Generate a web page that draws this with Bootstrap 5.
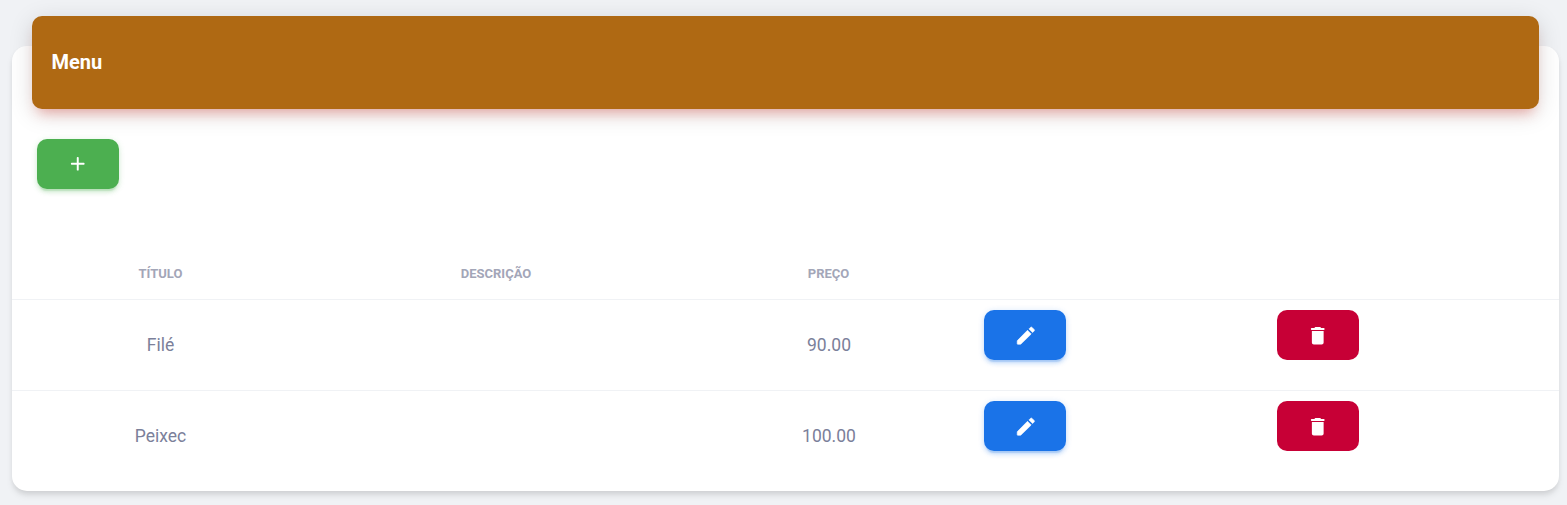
<!DOCTYPE html>
<html lang="pt-BR">
<head>
<meta charset="utf-8">
<meta name="viewport" content="width=device-width, initial-scale=1">
<title>Menu</title>
<link href="https://cdn.jsdelivr.net/npm/bootstrap@5.3.0/dist/css/bootstrap.min.css" rel="stylesheet">
<style>
  body { background: #f0f2f5; font-family: Roboto, "Liberation Sans", sans-serif; color: #7b809a; overflow: hidden; }
  .menu-page { padding: 46px 8px 14px 12px; }
  .menu-card { height: 445px; border-radius: 15px; box-shadow: 0 5px 7.5px -1.25px rgba(0,0,0,.1), 0 2.5px 5px -1.25px rgba(0,0,0,.06); }
  .menu-head { height: 93px; margin: -30px 20px 0; padding: 0 19.5px 1px; background: #af6913; border-radius: 10px;
    box-shadow: 0 5px 25px 0 rgba(0,0,0,.14), 0 8.75px 12.5px -6.25px rgba(244,67,54,.4); }
  .menu-head h6 { font-size: 20px; line-height: 32px; }
  .action { width: 82px; height: 50px; padding: 0; border: 0; border-radius: 10px; }
  .action-add { margin: 30px 0 0 25px; background: #4caf50; box-shadow: 0 3.75px 3.75px 0 rgba(76,175,80,.1), 0 3.75px 1.25px -2.5px rgba(76,175,80,.2), 0 1.25px 6.25px 0 rgba(76,175,80,.2); }
  .action-edit { background: #1a73e8; box-shadow: 0 3.75px 3.75px 0 rgba(26,115,232,.1), 0 3.75px 1.25px -2.5px rgba(26,115,232,.2), 0 1.25px 6.25px 0 rgba(26,115,232,.2); }
  .action-delete { background: #c70036; }
  .action svg { display: block; width: 23.5px; height: 23.5px; fill: #fff; margin: 2px auto 0; }
  .action-add svg { margin-top: 0; }
  .action-edit svg { margin-left: 30px; }
  .menu-table { table-layout: fixed; margin-top: 57px; color: #7b809a; --bs-table-bg: transparent; }
  .menu-table th { height: 53px; padding: 3px 0 0; font-size: 13px; line-height: 20px; font-weight: 700; color: #a3a6b8; text-transform: uppercase; border-bottom: 1px solid #f0f2f5; }
  .menu-table td { height: 91px; padding: 10px; font-size: 17.5px; line-height: 26px; color: #7b809a; border-bottom: 1px solid #f0f2f5; }
  .menu-table td:nth-child(3) { padding-left: 11px; }
  .menu-table tr:last-child td { border-bottom: 0; }
</style>
</head>
<body>
<svg class="d-none" aria-hidden="true">
  <symbol id="icon-add" viewBox="0 0 24 24"><path d="M18 13h-5v5c0 .55-.45 1-1 1s-1-.45-1-1v-5H6c-.55 0-1-.45-1-1s.45-1 1-1h5V6c0-.55.45-1 1-1s1 .45 1 1v5h5c.55 0 1 .45 1 1s-.45 1-1 1z"/></symbol>
  <symbol id="icon-edit" viewBox="0 0 24 24"><path stroke="#fff" stroke-width=".6" stroke-linejoin="round" d="M3.300 17.3v2.900c0 .28.22.5.5.5h2.900c.13 0 .26-.05.35-.15L17.600 10.200l-3.800-3.800L3.450 16.940c-.1.1-.15.22-.15.36zM20.500 7.200a1.200 1.200 0 0 0 0-1.700l-2-2a1.200 1.200 0 0 0-1.700 0l-1.500 1.500 3.700 3.700 1.500-1.500z"/></symbol>
  <symbol id="icon-delete" viewBox="0 0 24 24"><path d="M6 19c0 1.100.9 2 2 2h8c1.100 0 2-.9 2-2V7.200H6V19zM18 4h-2.500l-.71-.71c-.18-.18-.44-.29-.7-.29H9.910c-.26 0-.52.11-.7.29L8.500 4H6c-.55 0-1 .45-1 1s.45 1 1 1h12c.55 0 1-.45 1-1s-.45-1-1-1z"/></symbol>
</svg>
<main class="menu-page">
  <div class="card menu-card border-0">
    <div class="menu-head d-flex align-items-center">
      <h6 class="text-white fw-bold m-0">Menu</h6>
    </div>
    <button class="btn action action-add" type="button" aria-label="Adicionar"><svg><use href="#icon-add"/></svg></button>
    <table class="table menu-table mb-0">
      <colgroup>
        <col style="width:297px"><col style="width:374px"><col style="width:291px"><col style="width:293px"><col>
      </colgroup>
      <thead>
        <tr class="text-center align-middle"><th>Título</th><th>Descrição</th><th>Preço</th><th></th><th></th></tr>
      </thead>
      <tbody>
        <tr>
          <td class="text-center align-middle">Filé</td><td></td><td class="text-center align-middle">90.00</td>
          <td><button class="btn action action-edit" type="button" aria-label="Editar"><svg><use href="#icon-edit"/></svg></button></td>
          <td><button class="btn action action-delete" type="button" aria-label="Excluir"><svg><use href="#icon-delete"/></svg></button></td>
        </tr>
        <tr>
          <td class="text-center align-middle">Peixec</td><td></td><td class="text-center align-middle">100.00</td>
          <td><button class="btn action action-edit" type="button" aria-label="Editar"><svg><use href="#icon-edit"/></svg></button></td>
          <td><button class="btn action action-delete" type="button" aria-label="Excluir"><svg><use href="#icon-delete"/></svg></button></td>
        </tr>
      </tbody>
    </table>
  </div>
</main>
<script src="https://cdn.jsdelivr.net/npm/bootstrap@5.3.0/dist/js/bootstrap.bundle.min.js"></script>
</body>
</html>
